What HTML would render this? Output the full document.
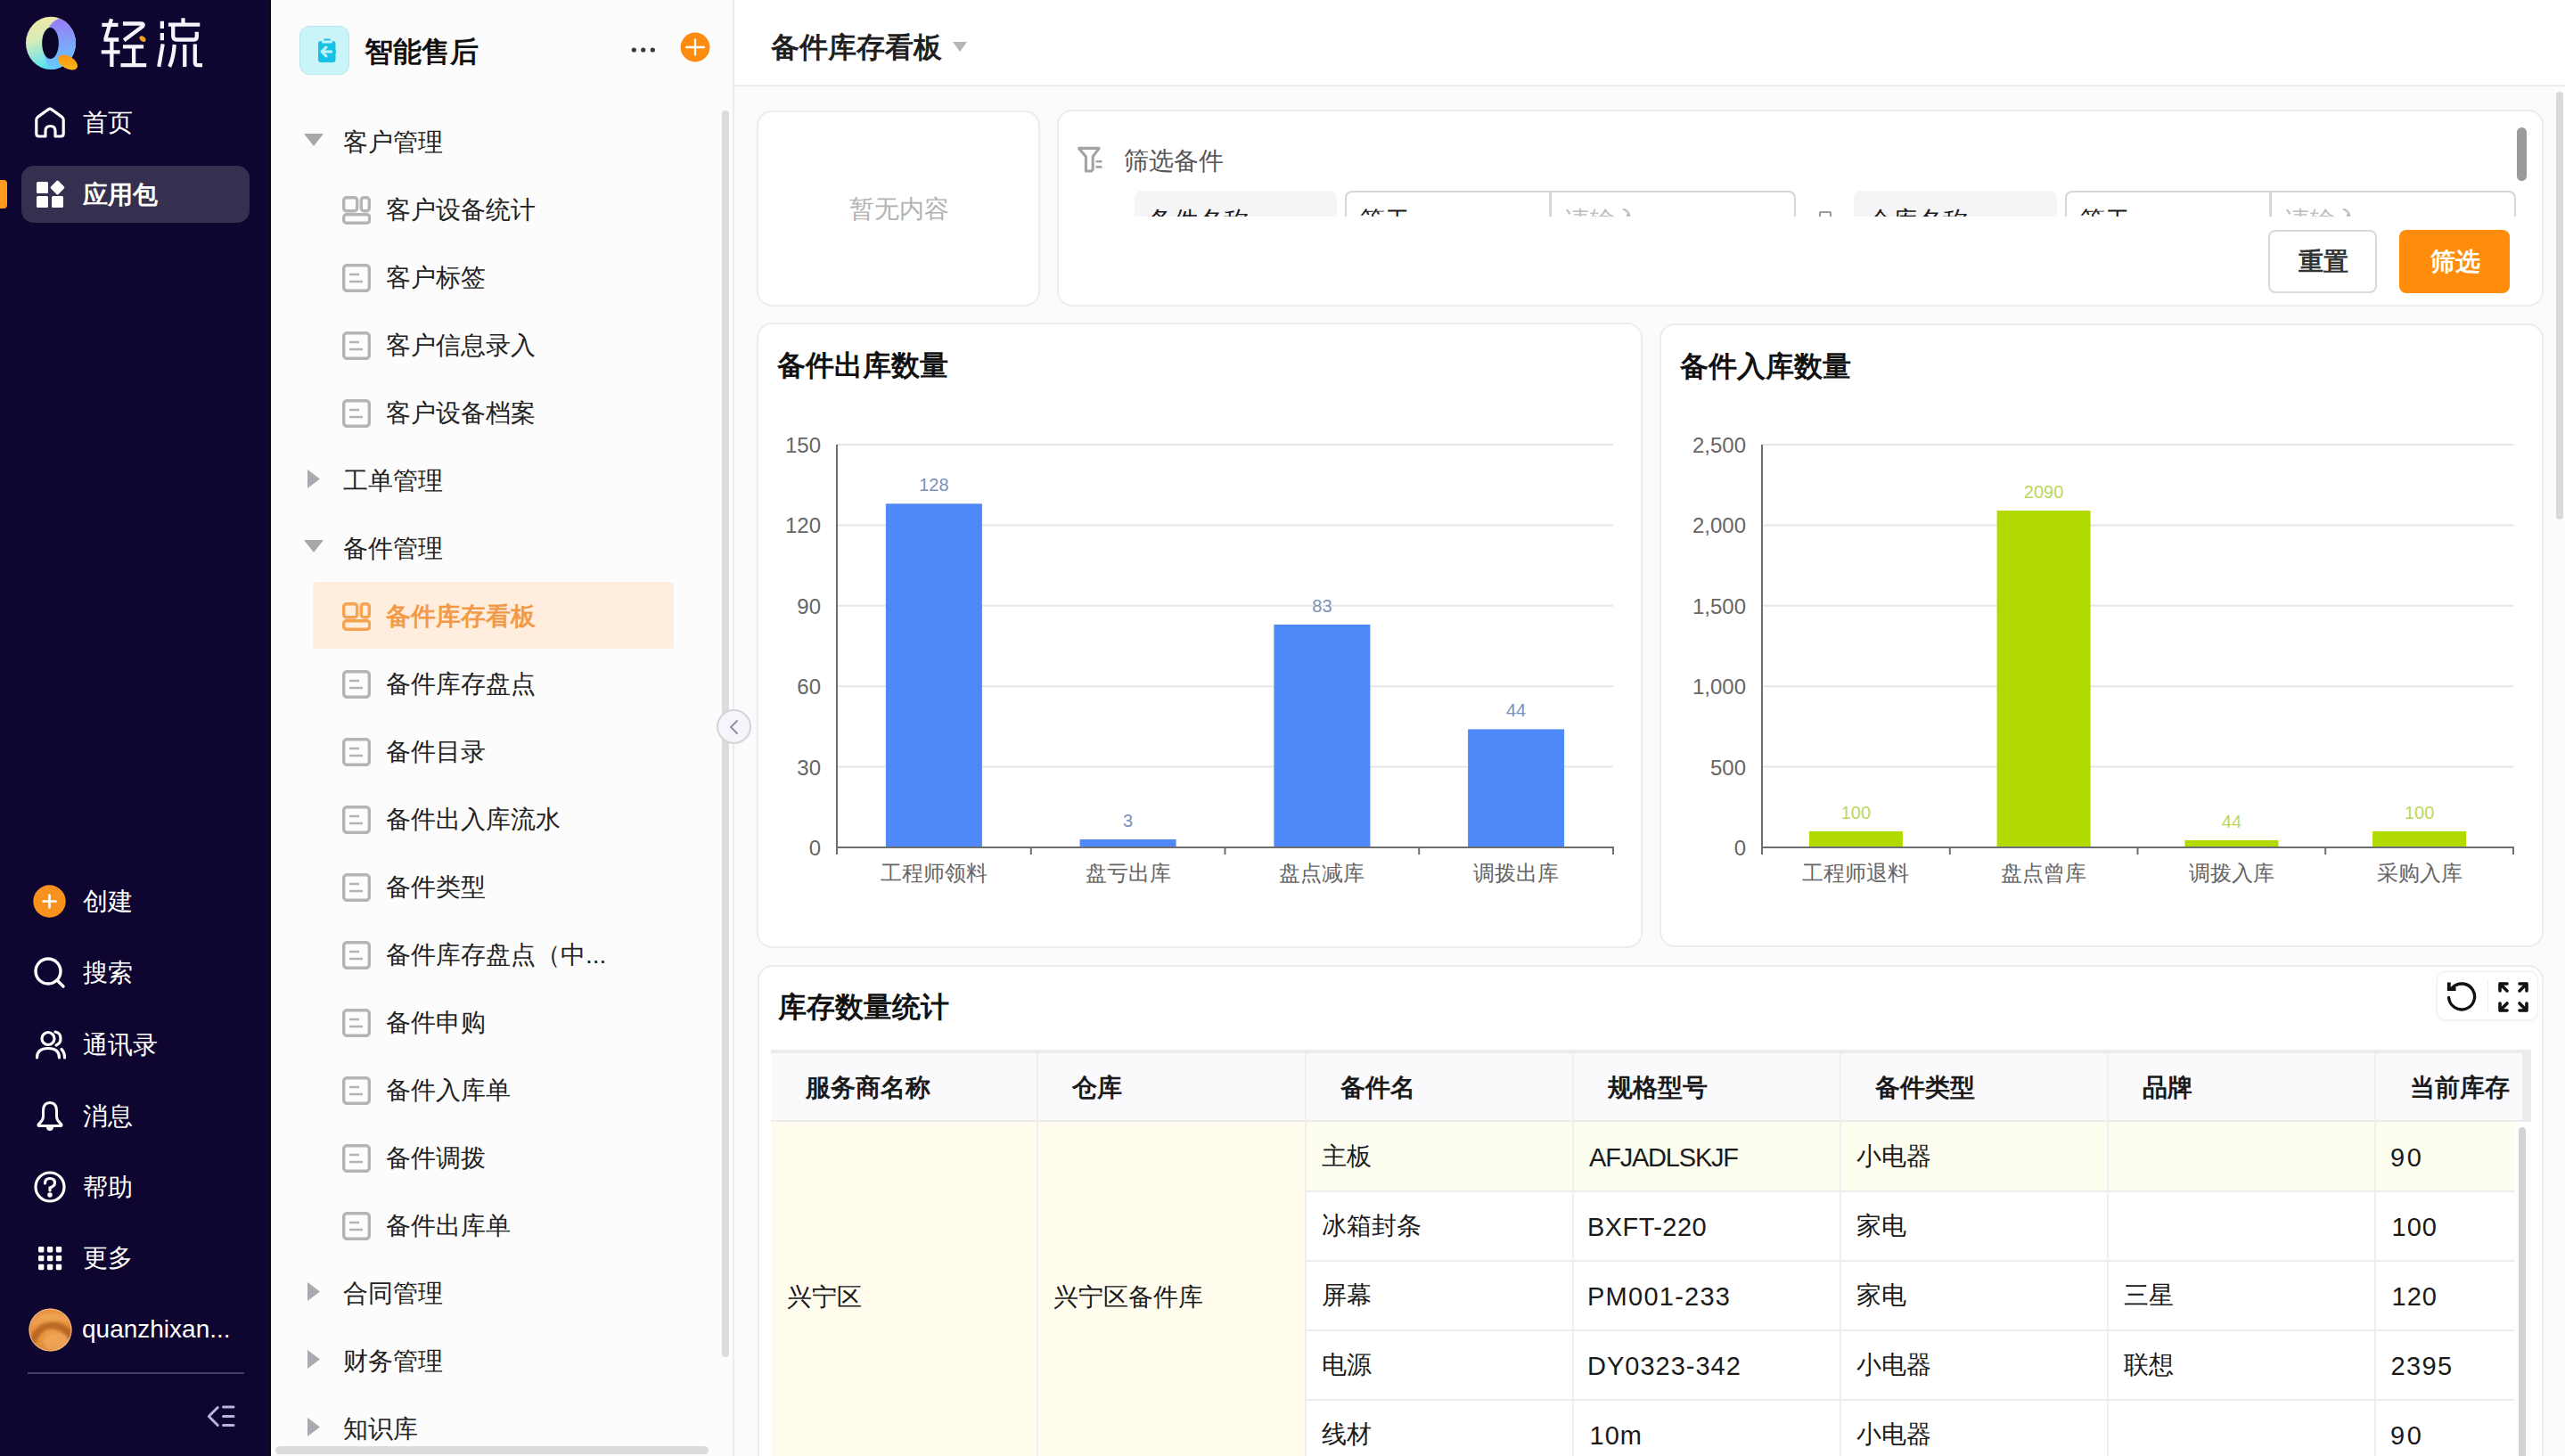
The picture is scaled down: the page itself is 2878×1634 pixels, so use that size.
<!DOCTYPE html>
<html><head><meta charset="utf-8">
<style>
*{margin:0;padding:0;box-sizing:border-box}
html,body{width:2878px;height:1634px;overflow:hidden;background:#fbfbfd;font-family:"Liberation Sans",sans-serif;color:#1f1f1f}
.a{position:absolute}
.t{position:absolute;white-space:nowrap;line-height:1}
/* sidebar */
#sb{left:0;top:0;width:304px;height:1634px;background:#0e0630}
#sb .t{color:#fff;font-size:28px}
/* panel */
#pn{left:304px;top:0;width:520px;height:1634px;background:#fcfcfc;border-right:2px solid #ececec;overflow:hidden}
#pn .t{font-size:28px;color:#222}
/* main */
#hd{left:824px;top:0;width:2054px;height:97px;background:#fff;border-bottom:2px solid #ececec}
.card{position:absolute;background:#fff;border:2px solid #ededef;border-radius:17px}
</style></head><body>

<!-- SIDEBAR -->
<div id="sb" class="a">
  <div class="a" style="left:302px;top:0;width:2px;height:1634px;background:#09071c"></div>
  <!-- logo -->
  <svg class="a" style="left:27px;top:17px" width="64" height="64" viewBox="0 0 64 64">
    <defs>
      <linearGradient id="lgL" x1="0" y1="0" x2="0.3" y2="1">
        <stop offset="0" stop-color="#f4e6a4"/>
        <stop offset="0.45" stop-color="#d9ecb8"/>
        <stop offset="1" stop-color="#55e2f6"/>
      </linearGradient>
      <linearGradient id="lgR" x1="0" y1="0" x2="0" y2="1">
        <stop offset="0" stop-color="#9a78f6"/>
        <stop offset="0.6" stop-color="#74b4fa"/>
        <stop offset="1" stop-color="#62d6fa"/>
      </linearGradient>
      <linearGradient id="lgT" x1="0" y1="0" x2="1" y2="1">
        <stop offset="0" stop-color="#ff8a10"/>
        <stop offset="1" stop-color="#f7c21a"/>
      </linearGradient>
      <clipPath id="qc"><ellipse cx="30" cy="31.4" rx="28" ry="29.6"/></clipPath>
    </defs>
    <ellipse cx="30" cy="31.4" rx="28" ry="29.6" fill="url(#lgL)"/>
    <g clip-path="url(#qc)"><ellipse cx="44" cy="36" rx="22" ry="33" fill="url(#lgR)"/></g>
    <ellipse cx="29.5" cy="31.5" rx="9.3" ry="17.6" fill="#0a0628"/>
    <ellipse cx="49" cy="53" rx="12" ry="7" transform="rotate(30 49 53)" fill="url(#lgT)"/>
  </svg>
  <svg class="a" style="left:100px;top:10px" width="140" height="80" viewBox="0 0 2548 1456" fill="none" stroke="#f6f4fc" stroke-width="78">
    <path d="M262 325 H592 M455 205 L330 630 M300 628 H605 M462 628 V1182 M250 880 H630"/>
    <path d="M690 300 H1065 Q1125 300 1095 355 L712 640" stroke-linejoin="round"/>
    <path d="M690 772 H1112 M912 772 V1150 M645 1150 H1168"/>
    <ellipse cx="1092" cy="612" rx="72" ry="48" transform="rotate(40 1092 612)" fill="#f2a41c" stroke="none"/>
    <path d="M1490 248 V402 M1490 490 V642 M1505 718 L1425 1182"/>
    <path d="M1618 322 H2262 M1920 185 V322"/>
    <path d="M1715 330 V555 Q1715 628 1792 628 H2140 Q2198 628 2198 570 V468"/>
    <path d="M1742 728 Q1725 1000 1642 1182 M1952 728 V1182 M2162 718 V1098 Q2162 1150 2214 1150 H2312"/>
  </svg>

  <!-- home -->
  <svg class="a" style="left:38px;top:120px" width="36" height="36" viewBox="0 0 36 36" fill="none" stroke="#fff" stroke-width="3.2" stroke-linejoin="round" stroke-linecap="round">
    <path d="M2.8 14.5 Q2.8 12.6 4.3 11.4 L15.8 3 Q18 1.5 20.2 3 L31.7 11.4 Q33.2 12.6 33.2 14.5 V30 Q33.2 33 30.2 33 H24 V27 Q24 21.5 18.5 21.5 Q13 21.5 13 27 V33 H5.8 Q2.8 33 2.8 30 Z"/>
  </svg>
  <div class="t" style="left:93px;top:124px">首页</div>

  <div class="a" style="left:24px;top:186px;width:256px;height:64px;background:#35304f;border-radius:14px"></div>
  <div class="a" style="left:0;top:202px;width:8px;height:32px;background:#ff9a1f;border-radius:0 4px 4px 0"></div>
  <svg class="a" style="left:40px;top:202px" width="33" height="33" viewBox="0 0 33 33" fill="#fff">
    <rect x="1" y="2" width="13" height="13" rx="1.5"/>
    <rect x="1" y="18" width="13" height="13" rx="1.5"/>
    <rect x="18" y="18" width="13" height="13" rx="1.5"/>
    <rect x="18.5" y="2.5" width="12" height="12" rx="1.5" transform="rotate(45 24.5 8.5)"/>
  </svg>
  <div class="t" style="left:93px;top:205px;font-weight:bold">应用包</div>

  <!-- bottom nav -->
  <svg class="a" style="left:37px;top:993px" width="37" height="37" viewBox="0 0 37 37">
    <circle cx="18.5" cy="18.5" r="18.2" fill="#f8921e"/>
    <path d="M18.5 11.5 V25.5 M11.5 18.5 H25.5" stroke="#fff" stroke-width="2.6" stroke-linecap="round"/>
  </svg>
  <div class="t" style="left:93px;top:998px">创建</div>

  <svg class="a" style="left:37px;top:1073px" width="38" height="38" viewBox="0 0 38 38" fill="none" stroke="#fff" stroke-width="3.4" stroke-linecap="round">
    <circle cx="17" cy="17" r="14"/>
    <path d="M27 27 L34 34"/>
  </svg>
  <div class="t" style="left:93px;top:1078px">搜索</div>

  <svg class="a" style="left:37px;top:1154px" width="38" height="36" viewBox="0 0 38 36" fill="none" stroke="#fff" stroke-width="3.2" stroke-linecap="round">
    <circle cx="17" cy="11.5" r="7"/>
    <path d="M4.5 33 Q4.5 22.5 17 22.5 Q29.5 22.5 29.5 33"/>
    <path d="M25 4 Q31 5 31 11.5 Q31 17 26 19"/>
    <path d="M32 23.5 Q35.5 27 35.5 33"/>
  </svg>
  <div class="t" style="left:93px;top:1159px">通讯录</div>

  <svg class="a" style="left:38px;top:1234px" width="36" height="38" viewBox="0 0 36 38" fill="none" stroke="#fff" stroke-width="3" stroke-linejoin="round" stroke-linecap="round">
    <path d="M18 3.5 Q10.5 3.5 10.5 12.5 V19 Q10.5 23 6.5 26.5 Q4 28.5 5.5 29.5 H30.5 Q32 28.5 29.5 26.5 Q25.5 23 25.5 19 V12.5 Q25.5 3.5 18 3.5 Z"/>
    <path d="M14.8 31 A3.2 3.2 0 0 0 21.2 31 Z" fill="#fff" stroke-width="1.5"/>
  </svg>
  <div class="t" style="left:93px;top:1239px">消息</div>

  <svg class="a" style="left:37px;top:1313px" width="38" height="38" viewBox="0 0 38 38" fill="none" stroke="#fff" stroke-width="3.2" stroke-linecap="round">
    <circle cx="19" cy="19" r="16"/>
    <path d="M13.5 15 Q13.5 9.5 19 9.5 Q24.5 9.5 24.5 14.5 Q24.5 18 19 20 V23"/>
    <circle cx="19" cy="28" r="1.2" fill="#fff"/>
  </svg>
  <div class="t" style="left:93px;top:1319px">帮助</div>

  <svg class="a" style="left:42.5px;top:1399px" width="27" height="27" viewBox="0 0 27 27" fill="#fff"><rect x="0.0" y="0.0" width="6.4" height="6.4" rx="1.4"/><rect x="9.9" y="0.0" width="6.4" height="6.4" rx="1.4"/><rect x="19.8" y="0.0" width="6.4" height="6.4" rx="1.4"/><rect x="0.0" y="9.9" width="6.4" height="6.4" rx="1.4"/><rect x="9.9" y="9.9" width="6.4" height="6.4" rx="1.4"/><rect x="19.8" y="9.9" width="6.4" height="6.4" rx="1.4"/><rect x="0.0" y="19.8" width="6.4" height="6.4" rx="1.4"/><rect x="9.9" y="19.8" width="6.4" height="6.4" rx="1.4"/><rect x="19.8" y="19.8" width="6.4" height="6.4" rx="1.4"/></svg>
  <div class="t" style="left:93px;top:1398px">更多</div>

  <svg class="a" style="left:31.5px;top:1467.5px" width="49" height="49" viewBox="0 0 49 49">
    <defs>
      <radialGradient id="av" cx="0.45" cy="0.4" r="0.65"><stop offset="0" stop-color="#f0a24e"/><stop offset="1" stop-color="#e08634"/></radialGradient>
      <clipPath id="avc"><circle cx="24.5" cy="24.5" r="24"/></clipPath><filter id="avb"><feGaussianBlur stdDeviation="1.6"/></filter>
    </defs>
    <circle cx="24.5" cy="24.5" r="24" fill="url(#av)"/>
    <g clip-path="url(#avc)"><g filter="url(#avb)">
      <path d="M2 44 Q10 16 32 20 Q44 23 50 36" fill="none" stroke="#a9581c" stroke-width="8" opacity="0.75"/>
      <path d="M4 18 Q20 2 46 14" fill="none" stroke="#f2aa5a" stroke-width="6" opacity="0.6"/>
      <ellipse cx="31" cy="38" rx="14" ry="10" fill="#f6b068" opacity="0.55"/>
    </g></g>
    <circle cx="24.5" cy="24.5" r="23.5" fill="none" stroke="#f4c9a0" stroke-width="1.2" opacity="0.7"/>
  </svg>
  <div class="t" style="left:92px;top:1478px;font-size:28px">quanzhixan...</div>

  <div class="a" style="left:31px;top:1540px;width:243px;height:2px;background:#433e68"></div>
  <svg class="a" style="left:231px;top:1576px" width="34" height="26" viewBox="0 0 34 26" fill="none" stroke="#b9b4d8" stroke-width="3" stroke-linecap="round" stroke-linejoin="round">
    <path d="M13.3 3.5 L3.3 13.5 L13.3 23.5"/>
    <path d="M19.5 3 H31 M19.5 13.5 H31 M19.5 23.5 H31"/>
  </svg>
</div>

<!-- PANEL -->
<div id="pn" class="a">
  <div class="a" style="left:32px;top:29px;width:56px;height:55px;background:#c9f4f8;border:1px solid #b9e6ec;border-radius:11px"></div>
  <svg class="a" style="left:48px;top:43px" width="26" height="28" viewBox="0 0 26 28">
    <rect x="5" y="3" width="19.5" height="24" rx="3" fill="#16c3e6"/>
    <rect x="11" y="0.5" width="8" height="3.5" rx="1.5" fill="#16c3e6"/>
    <rect x="9" y="2.5" width="12" height="3" rx="1.5" fill="#c9f4f8"/>
    <path d="M14 10 L9 15 L14 20" fill="none" stroke="#bff6ff" stroke-width="3" stroke-linecap="round" stroke-linejoin="round"/>
    <path d="M10 15 H20" stroke="#bff6ff" stroke-width="3" stroke-linecap="round"/>
    <path d="M21 15 H25" stroke="#16c3e6" stroke-width="3"/>
  </svg>
  <div class="t" style="left:105px;top:42px;font-size:32px;font-weight:bold;color:#111">智能售后</div>
  <svg class="a" style="left:404px;top:51.7px" width="30" height="8" viewBox="0 0 30 8" fill="#383838"><circle cx="3.3" cy="4" r="2.6"/><circle cx="13.7" cy="4" r="2.6"/><circle cx="24.3" cy="4" r="2.6"/></svg>
  <svg class="a" style="left:458px;top:35.4px" width="36" height="36" viewBox="0 0 36 36">
    <circle cx="18" cy="18" r="16.4" fill="#fd8b10"/>
    <path d="M18 9.5 V26.5 M8 18 H28" stroke="#fff" stroke-width="2.3" stroke-linecap="round"/>
  </svg>
  <div class="a" style="left:506px;top:124px;width:8px;height:1399px;background:#dcdcdc;border-radius:4px"></div>
  <div class="a" style="left:5px;top:1623px;width:486px;height:9px;background:#dcdcdc;border-radius:5px"></div>
<svg class="a" style="left:37px;top:150.0px" width="22" height="14" viewBox="0 0 22 14"><path d="M0 0 H22 L11 14Z" fill="#a8a8a8"/></svg>
<div class="t" style="left:81px;top:146.0px">客户管理</div>
<svg class="a" style="left:80px;top:219.5px" width="32" height="32" viewBox="0 0 32 32" fill="none" stroke="#b4b4b4" stroke-width="3.4"><rect x="1.7" y="1.7" width="15" height="15" rx="3"/><rect x="21.3" y="1.7" width="9" height="15" rx="3"/><rect x="1.7" y="20.8" width="29" height="9.5" rx="3"/></svg>
<div class="t" style="left:129px;top:222.0px">客户设备统计</div>
<svg class="a" style="left:80px;top:295.5px" width="32" height="32" viewBox="0 0 32 32" fill="none" stroke="#b4b4b4" stroke-width="3.4"><rect x="1.7" y="1.7" width="28.6" height="28.6" rx="3.5"/><path d="M8 12 H19 M8 20 H23" stroke-width="2.6"/></svg>
<div class="t" style="left:129px;top:298.0px">客户标签</div>
<svg class="a" style="left:80px;top:371.5px" width="32" height="32" viewBox="0 0 32 32" fill="none" stroke="#b4b4b4" stroke-width="3.4"><rect x="1.7" y="1.7" width="28.6" height="28.6" rx="3.5"/><path d="M8 12 H19 M8 20 H23" stroke-width="2.6"/></svg>
<div class="t" style="left:129px;top:374.0px">客户信息录入</div>
<svg class="a" style="left:80px;top:447.5px" width="32" height="32" viewBox="0 0 32 32" fill="none" stroke="#b4b4b4" stroke-width="3.4"><rect x="1.7" y="1.7" width="28.6" height="28.6" rx="3.5"/><path d="M8 12 H19 M8 20 H23" stroke-width="2.6"/></svg>
<div class="t" style="left:129px;top:450.0px">客户设备档案</div>
<svg class="a" style="left:40.5px;top:526.5px" width="14" height="21" viewBox="0 0 14 21"><path d="M0 0 V21 L14 10.5Z" fill="#a9a9b0"/></svg>
<div class="t" style="left:81px;top:526.0px">工单管理</div>
<svg class="a" style="left:37px;top:606.0px" width="22" height="14" viewBox="0 0 22 14"><path d="M0 0 H22 L11 14Z" fill="#a8a8a8"/></svg>
<div class="t" style="left:81px;top:602.0px">备件管理</div>
<div class="a" style="left:47px;top:653.0px;width:405px;height:75px;background:#ffeedd;border-radius:4px"></div>
<svg class="a" style="left:80px;top:675.5px" width="32" height="32" viewBox="0 0 32 32" fill="none" stroke="#f6a24e" stroke-width="3.4"><rect x="1.7" y="1.7" width="15" height="15" rx="3"/><rect x="21.3" y="1.7" width="9" height="15" rx="3"/><rect x="1.7" y="20.8" width="29" height="9.5" rx="3"/></svg>
<div class="t" style="left:129px;top:678.0px;color:#f39a48;font-weight:bold">备件库存看板</div>
<svg class="a" style="left:80px;top:751.5px" width="32" height="32" viewBox="0 0 32 32" fill="none" stroke="#b4b4b4" stroke-width="3.4"><rect x="1.7" y="1.7" width="28.6" height="28.6" rx="3.5"/><path d="M8 12 H19 M8 20 H23" stroke-width="2.6"/></svg>
<div class="t" style="left:129px;top:754.0px">备件库存盘点</div>
<svg class="a" style="left:80px;top:827.5px" width="32" height="32" viewBox="0 0 32 32" fill="none" stroke="#b4b4b4" stroke-width="3.4"><rect x="1.7" y="1.7" width="28.6" height="28.6" rx="3.5"/><path d="M8 12 H19 M8 20 H23" stroke-width="2.6"/></svg>
<div class="t" style="left:129px;top:830.0px">备件目录</div>
<svg class="a" style="left:80px;top:903.5px" width="32" height="32" viewBox="0 0 32 32" fill="none" stroke="#b4b4b4" stroke-width="3.4"><rect x="1.7" y="1.7" width="28.6" height="28.6" rx="3.5"/><path d="M8 12 H19 M8 20 H23" stroke-width="2.6"/></svg>
<div class="t" style="left:129px;top:906.0px">备件出入库流水</div>
<svg class="a" style="left:80px;top:979.5px" width="32" height="32" viewBox="0 0 32 32" fill="none" stroke="#b4b4b4" stroke-width="3.4"><rect x="1.7" y="1.7" width="28.6" height="28.6" rx="3.5"/><path d="M8 12 H19 M8 20 H23" stroke-width="2.6"/></svg>
<div class="t" style="left:129px;top:982.0px">备件类型</div>
<svg class="a" style="left:80px;top:1055.5px" width="32" height="32" viewBox="0 0 32 32" fill="none" stroke="#b4b4b4" stroke-width="3.4"><rect x="1.7" y="1.7" width="28.6" height="28.6" rx="3.5"/><path d="M8 12 H19 M8 20 H23" stroke-width="2.6"/></svg>
<div class="t" style="left:129px;top:1058.0px">备件库存盘点（中...</div>
<svg class="a" style="left:80px;top:1131.5px" width="32" height="32" viewBox="0 0 32 32" fill="none" stroke="#b4b4b4" stroke-width="3.4"><rect x="1.7" y="1.7" width="28.6" height="28.6" rx="3.5"/><path d="M8 12 H19 M8 20 H23" stroke-width="2.6"/></svg>
<div class="t" style="left:129px;top:1134.0px">备件申购</div>
<svg class="a" style="left:80px;top:1207.5px" width="32" height="32" viewBox="0 0 32 32" fill="none" stroke="#b4b4b4" stroke-width="3.4"><rect x="1.7" y="1.7" width="28.6" height="28.6" rx="3.5"/><path d="M8 12 H19 M8 20 H23" stroke-width="2.6"/></svg>
<div class="t" style="left:129px;top:1210.0px">备件入库单</div>
<svg class="a" style="left:80px;top:1283.5px" width="32" height="32" viewBox="0 0 32 32" fill="none" stroke="#b4b4b4" stroke-width="3.4"><rect x="1.7" y="1.7" width="28.6" height="28.6" rx="3.5"/><path d="M8 12 H19 M8 20 H23" stroke-width="2.6"/></svg>
<div class="t" style="left:129px;top:1286.0px">备件调拨</div>
<svg class="a" style="left:80px;top:1359.5px" width="32" height="32" viewBox="0 0 32 32" fill="none" stroke="#b4b4b4" stroke-width="3.4"><rect x="1.7" y="1.7" width="28.6" height="28.6" rx="3.5"/><path d="M8 12 H19 M8 20 H23" stroke-width="2.6"/></svg>
<div class="t" style="left:129px;top:1362.0px">备件出库单</div>
<svg class="a" style="left:40.5px;top:1438.5px" width="14" height="21" viewBox="0 0 14 21"><path d="M0 0 V21 L14 10.5Z" fill="#a9a9b0"/></svg>
<div class="t" style="left:81px;top:1438.0px">合同管理</div>
<svg class="a" style="left:40.5px;top:1514.5px" width="14" height="21" viewBox="0 0 14 21"><path d="M0 0 V21 L14 10.5Z" fill="#a9a9b0"/></svg>
<div class="t" style="left:81px;top:1514.0px">财务管理</div>
<svg class="a" style="left:40.5px;top:1590.5px" width="14" height="21" viewBox="0 0 14 21"><path d="M0 0 V21 L14 10.5Z" fill="#a9a9b0"/></svg>
<div class="t" style="left:81px;top:1590.0px">知识库</div>

</div>

<!-- MAIN -->
<div id="hd" class="a">
  <div class="t" style="left:41px;top:37px;font-size:32px;font-weight:bold">备件库存看板</div>
  <svg class="a" style="left:244px;top:46px" width="18" height="13" viewBox="0 0 18 13"><path d="M1 1 H17 L9 12Z" fill="#b5b5b5"/></svg>
</div>

<!-- MAINBODY -->
<div class="a" style="left:804px;top:796px;width:39px;height:39px;border-radius:50%;background:#f6f5fb;border:2px solid #d4d4d8"></div>
<svg class="a" style="left:815px;top:806px" width="18" height="20" viewBox="0 0 18 20"><path d="M12 3 L5 10 L12 17" fill="none" stroke="#8c8c98" stroke-width="1.8" stroke-linecap="round"/></svg>
<div class="a" style="left:2868px;top:103px;width:8px;height:480px;background:#d9d9d9;border-radius:4px"></div>
<div class="card" style="left:849px;top:124px;width:318px;height:220px"></div>
<div class="t" style="left:953px;top:221px;font-size:28px;color:#b3b3b3">暂无内容</div>
<div class="card" style="left:1186px;top:123px;width:1668px;height:221px"></div>
<svg class="a" style="left:1208px;top:164px" width="32" height="30" viewBox="0 0 32 30" fill="none" stroke="#a3a3a3" stroke-width="3.1" stroke-linejoin="round"><path d="M2.6 2.4 H25.2 L18.2 11.7 V26 L16.6 28 H10.4 V11.7 Z"/><path d="M21.5 17.2 H28.4 M21.5 23.4 H28.4" stroke-width="2.6"/></svg>
<div class="t" style="left:1261px;top:167px;font-size:28px;color:#555">筛选备件</div>
<div class="a" style="left:1190px;top:200px;width:1640px;height:42.5px;overflow:hidden">
<div class="a" style="left:83px;top:14px;width:227px;height:64px;background:#f5f5f7;border-radius:8px"></div>
<div class="t" style="left:99px;top:34px;font-size:28px;color:#1a1a1a">备件名称</div>
<div class="a" style="left:319px;top:14px;width:231px;height:64px;border:2px solid #d6d6d6;border-radius:8px 0 0 8px"></div>
<div class="t" style="left:336px;top:34px;font-size:28px;color:#1a1a1a">等于</div>
<div class="a" style="left:549px;top:14px;width:276px;height:64px;border:2px solid #d6d6d6;border-radius:0 8px 8px 0"></div>
<div class="t" style="left:566px;top:34px;font-size:28px;color:#bdbdbd">请输入</div>
<div class="a" style="left:851px;top:37px;width:14px;height:14px;border:2px solid #999;border-radius:2px"></div>
<div class="a" style="left:890px;top:14px;width:228px;height:64px;background:#f5f5f7;border-radius:8px"></div>
<div class="t" style="left:906px;top:34px;font-size:28px;color:#1a1a1a">仓库名称</div>
<div class="a" style="left:1127px;top:14px;width:231px;height:64px;border:2px solid #d6d6d6;border-radius:8px 0 0 8px"></div>
<div class="t" style="left:1144px;top:34px;font-size:28px;color:#1a1a1a">等于</div>
<div class="a" style="left:1357px;top:14px;width:276px;height:64px;border:2px solid #d6d6d6;border-radius:0 8px 8px 0"></div>
<div class="t" style="left:1374px;top:34px;font-size:28px;color:#bdbdbd">请输入</div>
</div>
<div class="a" style="left:2824px;top:143px;width:11px;height:60px;background:#9a9a9a;border-radius:6px"></div>
<div class="a" style="left:2545px;top:258px;width:122px;height:71px;border:2px solid #d9d9d9;border-radius:8px;background:#fff"></div>
<div class="t" style="left:2579px;top:280px;font-size:28px;color:#333;font-weight:bold">重置</div>
<div class="a" style="left:2692px;top:258px;width:124px;height:71px;background:#ff8c0a;border-radius:8px"></div>
<div class="t" style="left:2727px;top:280px;font-size:28px;color:#fff;font-weight:bold">筛选</div>
<div class="card" style="left:849px;top:362px;width:994px;height:702px"></div>
<div class="t" style="left:872px;top:394px;font-size:32px;font-weight:bold;color:#111">备件出库数量</div>
<svg class="a" style="left:0;top:0" width="2878" height="1634" viewBox="0 0 2878 1634" >
<line x1="939" y1="499.0" x2="1810" y2="499.0" stroke="#e6e6e6" stroke-width="2"/>
<line x1="939" y1="589.4" x2="1810" y2="589.4" stroke="#e6e6e6" stroke-width="2"/>
<line x1="939" y1="679.8" x2="1810" y2="679.8" stroke="#e6e6e6" stroke-width="2"/>
<line x1="939" y1="770.2" x2="1810" y2="770.2" stroke="#e6e6e6" stroke-width="2"/>
<line x1="939" y1="860.6" x2="1810" y2="860.6" stroke="#e6e6e6" stroke-width="2"/>
<rect x="993.9" y="565.3" width="108" height="385.7" fill="#4f88f8"/>
<rect x="1211.6" y="942.0" width="108" height="9.0" fill="#4f88f8"/>
<rect x="1429.4" y="700.9" width="108" height="250.1" fill="#4f88f8"/>
<rect x="1647.1" y="818.4" width="108" height="132.6" fill="#4f88f8"/>
<line x1="939" y1="499" x2="939" y2="952.0" stroke="#6e6e6e" stroke-width="2"/>
<line x1="938" y1="951.0" x2="1811" y2="951.0" stroke="#6e6e6e" stroke-width="2"/>
<line x1="939.0" y1="951.0" x2="939.0" y2="959.0" stroke="#6e6e6e" stroke-width="2"/>
<line x1="1156.8" y1="951.0" x2="1156.8" y2="959.0" stroke="#6e6e6e" stroke-width="2"/>
<line x1="1374.5" y1="951.0" x2="1374.5" y2="959.0" stroke="#6e6e6e" stroke-width="2"/>
<line x1="1592.2" y1="951.0" x2="1592.2" y2="959.0" stroke="#6e6e6e" stroke-width="2"/>
<line x1="1810.0" y1="951.0" x2="1810.0" y2="959.0" stroke="#6e6e6e" stroke-width="2"/>
</svg>
<div class="t" style="right:1957px;top:488.0px;font-size:24px;color:#666">150</div>
<div class="t" style="right:1957px;top:578.4px;font-size:24px;color:#666">120</div>
<div class="t" style="right:1957px;top:668.8px;font-size:24px;color:#666">90</div>
<div class="t" style="right:1957px;top:759.2px;font-size:24px;color:#666">60</div>
<div class="t" style="right:1957px;top:849.6px;font-size:24px;color:#666">30</div>
<div class="t" style="right:1957px;top:940.0px;font-size:24px;color:#666">0</div>
<div class="t" style="left:947.9px;width:200px;text-align:center;top:534.3px;font-size:20px;color:#7792bd">128</div>
<div class="t" style="left:897.9px;width:300px;text-align:center;top:968.0px;font-size:24px;color:#666">工程师领料</div>
<div class="t" style="left:1165.6px;width:200px;text-align:center;top:911.0px;font-size:20px;color:#7792bd">3</div>
<div class="t" style="left:1115.6px;width:300px;text-align:center;top:968.0px;font-size:24px;color:#666">盘亏出库</div>
<div class="t" style="left:1383.4px;width:200px;text-align:center;top:669.9px;font-size:20px;color:#7792bd">83</div>
<div class="t" style="left:1333.4px;width:300px;text-align:center;top:968.0px;font-size:24px;color:#666">盘点减库</div>
<div class="t" style="left:1601.1px;width:200px;text-align:center;top:787.4px;font-size:20px;color:#7792bd">44</div>
<div class="t" style="left:1551.1px;width:300px;text-align:center;top:968.0px;font-size:24px;color:#666">调拨出库</div>
<div class="card" style="left:1862px;top:363px;width:992px;height:700px"></div>
<div class="t" style="left:1885px;top:395px;font-size:32px;font-weight:bold;color:#111">备件入库数量</div>
<svg class="a" style="left:0;top:0" width="2878" height="1634" viewBox="0 0 2878 1634" >
<line x1="1977" y1="499.0" x2="2820" y2="499.0" stroke="#e6e6e6" stroke-width="2"/>
<line x1="1977" y1="589.4" x2="2820" y2="589.4" stroke="#e6e6e6" stroke-width="2"/>
<line x1="1977" y1="679.8" x2="2820" y2="679.8" stroke="#e6e6e6" stroke-width="2"/>
<line x1="1977" y1="770.2" x2="2820" y2="770.2" stroke="#e6e6e6" stroke-width="2"/>
<line x1="1977" y1="860.6" x2="2820" y2="860.6" stroke="#e6e6e6" stroke-width="2"/>
<rect x="2029.9" y="932.9" width="105" height="18.1" fill="#b1da00"/>
<rect x="2240.6" y="573.1" width="105" height="377.9" fill="#b1da00"/>
<rect x="2451.4" y="943.0" width="105" height="8.0" fill="#b1da00"/>
<rect x="2662.1" y="932.9" width="105" height="18.1" fill="#b1da00"/>
<line x1="1977" y1="499" x2="1977" y2="952.0" stroke="#6e6e6e" stroke-width="2"/>
<line x1="1976" y1="951.0" x2="2821" y2="951.0" stroke="#6e6e6e" stroke-width="2"/>
<line x1="1977.0" y1="951.0" x2="1977.0" y2="959.0" stroke="#6e6e6e" stroke-width="2"/>
<line x1="2187.8" y1="951.0" x2="2187.8" y2="959.0" stroke="#6e6e6e" stroke-width="2"/>
<line x1="2398.5" y1="951.0" x2="2398.5" y2="959.0" stroke="#6e6e6e" stroke-width="2"/>
<line x1="2609.2" y1="951.0" x2="2609.2" y2="959.0" stroke="#6e6e6e" stroke-width="2"/>
<line x1="2820.0" y1="951.0" x2="2820.0" y2="959.0" stroke="#6e6e6e" stroke-width="2"/>
</svg>
<div class="t" style="right:919px;top:488.0px;font-size:24px;color:#666">2,500</div>
<div class="t" style="right:919px;top:578.4px;font-size:24px;color:#666">2,000</div>
<div class="t" style="right:919px;top:668.8px;font-size:24px;color:#666">1,500</div>
<div class="t" style="right:919px;top:759.2px;font-size:24px;color:#666">1,000</div>
<div class="t" style="right:919px;top:849.6px;font-size:24px;color:#666">500</div>
<div class="t" style="right:919px;top:940.0px;font-size:24px;color:#666">0</div>
<div class="t" style="left:1982.4px;width:200px;text-align:center;top:901.9px;font-size:20px;color:#bcd75c">100</div>
<div class="t" style="left:1932.4px;width:300px;text-align:center;top:968.0px;font-size:24px;color:#666">工程师退料</div>
<div class="t" style="left:2193.1px;width:200px;text-align:center;top:542.1px;font-size:20px;color:#bcd75c">2090</div>
<div class="t" style="left:2143.1px;width:300px;text-align:center;top:968.0px;font-size:24px;color:#666">盘点曾库</div>
<div class="t" style="left:2403.9px;width:200px;text-align:center;top:912.0px;font-size:20px;color:#bcd75c">44</div>
<div class="t" style="left:2353.9px;width:300px;text-align:center;top:968.0px;font-size:24px;color:#666">调拨入库</div>
<div class="t" style="left:2614.6px;width:200px;text-align:center;top:901.9px;font-size:20px;color:#bcd75c">100</div>
<div class="t" style="left:2564.6px;width:300px;text-align:center;top:968.0px;font-size:24px;color:#666">采购入库</div>
<div class="card" style="left:850px;top:1083px;width:2004px;height:600px"></div>
<div class="t" style="left:873px;top:1114px;font-size:32px;font-weight:bold;color:#111">库存数量统计</div>
<div class="a" style="left:2734px;top:1090px;width:114px;height:55px;background:#fff;border:1px solid #eeeeee;border-radius:10px;box-shadow:0 1px 4px rgba(0,0,0,0.06)"></div>
<svg class="a" style="left:2744px;top:1100px" width="36" height="36" viewBox="0 0 36 36" fill="none" stroke="#111" stroke-width="3.4" stroke-linecap="round"><path d="M7.8 8.2 A14.5 14.5 0 1 1 3.6 19.5"/><path d="M3.8 2.5 V10 H11.5" stroke-linecap="butt" stroke-width="3.8"/></svg>
<div class="a" style="left:2791px;top:1100px;width:1px;height:36px;background:#eee"></div>
<svg class="a" style="left:2802px;top:1101px" width="36" height="36" viewBox="0 0 36 36" fill="none" stroke="#111" stroke-width="3.6" stroke-linecap="round" stroke-linejoin="round"><path d="M3 11 V3 H11 M3 3 L11 11"/><path d="M25 3 H33 V11 M33 3 L25 11"/><path d="M3 25 V33 H11 M3 33 L11 25"/><path d="M33 25 V33 H25 M33 33 L25 25"/></svg>
<div class="a" style="left:865px;top:1178px;width:1975px;height:456px;overflow:hidden">
<div class="a" style="left:0;top:0;width:1975px;height:4px;background:#ececec"></div>
<div class="a" style="left:0;top:4px;width:1965px;height:77px;background:#fafafd;border-bottom:2px solid #ececec"></div>
<div class="t" style="left:39px;top:1207px;margin-top:-1178px;font-size:28px;font-weight:bold;color:#1a1a1a">服务商名称</div>
<div class="t" style="left:338px;top:1207px;margin-top:-1178px;font-size:28px;font-weight:bold;color:#1a1a1a">仓库</div>
<div class="t" style="left:639px;top:1207px;margin-top:-1178px;font-size:28px;font-weight:bold;color:#1a1a1a">备件名</div>
<div class="t" style="left:939px;top:1207px;margin-top:-1178px;font-size:28px;font-weight:bold;color:#1a1a1a">规格型号</div>
<div class="t" style="left:1239px;top:1207px;margin-top:-1178px;font-size:28px;font-weight:bold;color:#1a1a1a">备件类型</div>
<div class="t" style="left:1539px;top:1207px;margin-top:-1178px;font-size:28px;font-weight:bold;color:#1a1a1a">品牌</div>
<div class="t" style="left:1839px;top:1207px;margin-top:-1178px;font-size:28px;font-weight:bold;color:#1a1a1a">当前库存</div>
<div class="a" style="left:0;top:81px;width:298px;height:400px;background:#fffcee"></div>
<div class="a" style="left:300px;top:81px;width:299px;height:400px;background:#fffcee"></div>
<div class="a" style="left:601px;top:81px;width:1356px;height:77px;background:#fdfdf0"></div>
<div class="a" style="left:298px;top:4px;width:2px;height:452px;background:#f0f0f2"></div>
<div class="a" style="left:599px;top:4px;width:2px;height:452px;background:#f0f0f2"></div>
<div class="a" style="left:899px;top:4px;width:2px;height:452px;background:#f0f0f2"></div>
<div class="a" style="left:1199px;top:4px;width:2px;height:452px;background:#f0f0f2"></div>
<div class="a" style="left:1499px;top:4px;width:2px;height:452px;background:#f0f0f2"></div>
<div class="a" style="left:1799px;top:4px;width:2px;height:452px;background:#f0f0f2"></div>
<div class="t" style="left:618px;top:106px;font-size:28px;color:#1a1a1a">主板</div>
<div class="t" style="left:918px;top:107px;font-size:29px;letter-spacing:-1.2px;color:#1a1a1a">AFJADLSKJF</div>
<div class="t" style="left:1218px;top:106px;font-size:28px;color:#1a1a1a">小电器</div>
<div class="t" style="left:1518px;top:106px;font-size:28px;color:#1a1a1a"></div>
<div class="t" style="left:1817px;top:107px;font-size:29px;letter-spacing:2.5px;color:#1a1a1a">90</div>
<div class="a" style="left:600px;top:158px;width:1356px;height:2px;background:#ececec"></div>
<div class="t" style="left:618px;top:184px;font-size:28px;color:#1a1a1a">冰箱封条</div>
<div class="t" style="left:916px;top:185px;font-size:29px;letter-spacing:0.43px;color:#1a1a1a">BXFT-220</div>
<div class="t" style="left:1218px;top:184px;font-size:28px;color:#1a1a1a">家电</div>
<div class="t" style="left:1518px;top:184px;font-size:28px;color:#1a1a1a"></div>
<div class="t" style="left:1818.5px;top:185px;font-size:29px;letter-spacing:1.0px;color:#1a1a1a">100</div>
<div class="a" style="left:600px;top:236px;width:1356px;height:2px;background:#ececec"></div>
<div class="t" style="left:618px;top:262px;font-size:28px;color:#1a1a1a">屏幕</div>
<div class="t" style="left:916px;top:263px;font-size:29px;letter-spacing:1.25px;color:#1a1a1a">PM001-233</div>
<div class="t" style="left:1218px;top:262px;font-size:28px;color:#1a1a1a">家电</div>
<div class="t" style="left:1518px;top:262px;font-size:28px;color:#1a1a1a">三星</div>
<div class="t" style="left:1818.5px;top:263px;font-size:29px;letter-spacing:1.0px;color:#1a1a1a">120</div>
<div class="a" style="left:600px;top:314px;width:1356px;height:2px;background:#ececec"></div>
<div class="t" style="left:618px;top:340px;font-size:28px;color:#1a1a1a">电源</div>
<div class="t" style="left:916px;top:341px;font-size:29px;letter-spacing:1.0px;color:#1a1a1a">DY0323-342</div>
<div class="t" style="left:1218px;top:340px;font-size:28px;color:#1a1a1a">小电器</div>
<div class="t" style="left:1518px;top:340px;font-size:28px;color:#1a1a1a">联想</div>
<div class="t" style="left:1817.5px;top:341px;font-size:29px;letter-spacing:1.33px;color:#1a1a1a">2395</div>
<div class="a" style="left:600px;top:392px;width:1356px;height:2px;background:#ececec"></div>
<div class="t" style="left:618px;top:418px;font-size:28px;color:#1a1a1a">线材</div>
<div class="t" style="left:918.5px;top:419px;font-size:29px;letter-spacing:1.0px;color:#1a1a1a">10m</div>
<div class="t" style="left:1218px;top:418px;font-size:28px;color:#1a1a1a">小电器</div>
<div class="t" style="left:1518px;top:418px;font-size:28px;color:#1a1a1a"></div>
<div class="t" style="left:1817px;top:419px;font-size:29px;letter-spacing:2.5px;color:#1a1a1a">90</div>
<div class="t" style="left:18px;top:264px;font-size:28px;color:#1a1a1a">兴宁区</div>
<div class="t" style="left:317px;top:264px;font-size:28px;color:#1a1a1a">兴宁区备件库</div>
<div class="a" style="left:1965px;top:4px;width:10px;height:77px;background:#ececec"></div>
<div class="a" style="left:1961px;top:87px;width:8px;height:380px;background:#d2d2d2;border-radius:4px"></div>
</div>

</body></html>
